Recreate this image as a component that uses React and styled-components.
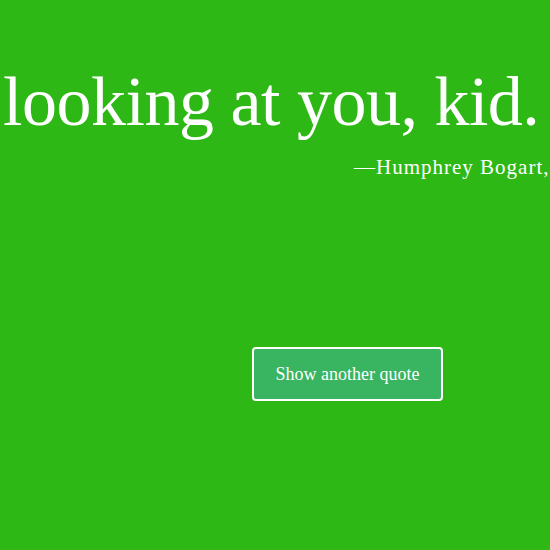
import React from "react";
import styled, { createGlobalStyle } from "styled-components";

const Global = createGlobalStyle`
  html, body {
    margin: 0;
    padding: 0;
    background: #2eb815;
  }
  * {
    box-sizing: border-box;
  }
`;

const Page = styled.main`
  width: 100%;
  height: 100vh;
  overflow: hidden;
  background: #2eb815;
  color: #fff;
  font-family: "Liberation Serif", "DejaVu Serif", serif;
  display: flex;
  flex-direction: column;
`;

const QuoteBox = styled.section`
  padding-top: 62px;
  display: flex;
  flex-direction: column;
`;

const QuoteText = styled.p`
  margin: 0;
  padding-left: 3px;
  white-space: nowrap;
  font-size: 70px;
  line-height: 80px;
  letter-spacing: -0.5px;
`;

const Author = styled.p`
  margin: 13px 0 0 354px;
  white-space: nowrap;
  font-size: 21px;
  line-height: 24px;
  letter-spacing: 1px;
`;

const ButtonRow = styled.div`
  margin-top: 168px;
  display: flex;
  justify-content: center;
  padding-left: 145px;
`;

const QuoteButton = styled.button`
  width: 191px;
  height: 54px;
  background: #39b460;
  border: 2px solid #fff;
  border-radius: 4px;
  color: #fff;
  font-family: "Liberation Serif", "DejaVu Serif", serif;
  font-size: 18px;
  cursor: pointer;
`;

export default function App() {
  return (
    <Page>
      <Global />
      <QuoteBox>
        <QuoteText>looking at you, kid.</QuoteText>
        <Author>—Humphrey Bogart,</Author>
      </QuoteBox>
      <ButtonRow>
        <QuoteButton>Show another quote</QuoteButton>
      </ButtonRow>
    </Page>
  );
}
